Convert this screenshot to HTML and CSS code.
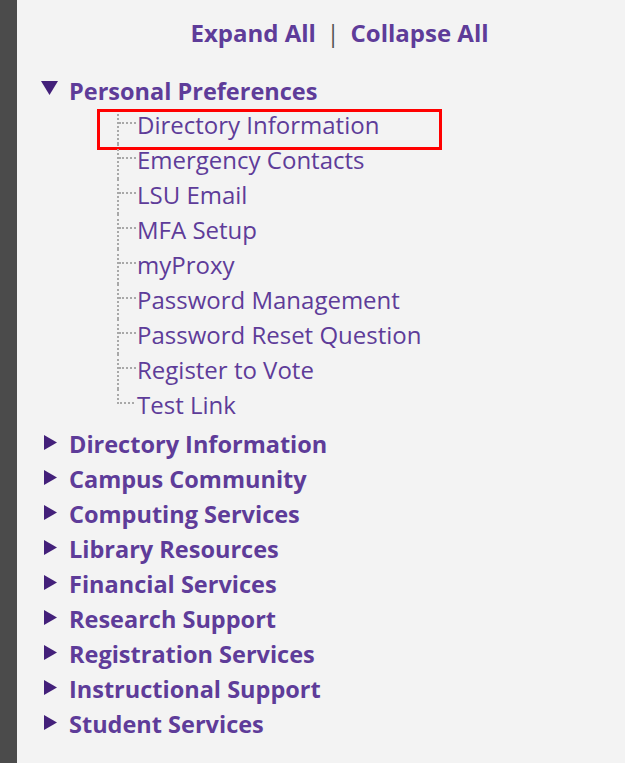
FILE: index.html
```html
<!DOCTYPE html>
<html>
<head>
<meta charset="utf-8">
<link rel="stylesheet" href="styles.css">
</head>
<body>
<div class="page">
  <div class="strip"></div>
  <div class="content">
    <div class="toplinks">
      <a class="toplink">Expand All</a>
      <span class="sep">|</span>
      <a class="toplink">Collapse All</a>
    </div>
    <ul class="tree">
      <li class="node open">
        <div class="row">
          <svg class="tri down" width="17" height="14" viewBox="0 0 17 14"><polygon points="0,0 17,0 8.5,14" /></svg>
          <span class="label">Personal Preferences</span>
        </div>
        <ul class="children">
          <li class="child highlighted"><span class="hl"></span><a>Directory Information</a></li>
          <li class="child"><a>Emergency Contacts</a></li>
          <li class="child"><a>LSU Email</a></li>
          <li class="child"><a>MFA Setup</a></li>
          <li class="child"><a>myProxy</a></li>
          <li class="child"><a>Password Management</a></li>
          <li class="child"><a>Password Reset Question</a></li>
          <li class="child"><a>Register to Vote</a></li>
          <li class="child last"><a>Test Link</a></li>
        </ul>
      </li>
      <li class="node"><div class="row"><svg class="tri right" width="13" height="15" viewBox="0 0 13 15"><polygon points="0,0 13,7.5 0,15" /></svg><span class="label">Directory Information</span></div></li>
      <li class="node"><div class="row"><svg class="tri right" width="13" height="15" viewBox="0 0 13 15"><polygon points="0,0 13,7.5 0,15" /></svg><span class="label">Campus Community</span></div></li>
      <li class="node"><div class="row"><svg class="tri right" width="13" height="15" viewBox="0 0 13 15"><polygon points="0,0 13,7.5 0,15" /></svg><span class="label">Computing Services</span></div></li>
      <li class="node"><div class="row"><svg class="tri right" width="13" height="15" viewBox="0 0 13 15"><polygon points="0,0 13,7.5 0,15" /></svg><span class="label">Library Resources</span></div></li>
      <li class="node"><div class="row"><svg class="tri right" width="13" height="15" viewBox="0 0 13 15"><polygon points="0,0 13,7.5 0,15" /></svg><span class="label">Financial Services</span></div></li>
      <li class="node"><div class="row"><svg class="tri right" width="13" height="15" viewBox="0 0 13 15"><polygon points="0,0 13,7.5 0,15" /></svg><span class="label">Research Support</span></div></li>
      <li class="node"><div class="row"><svg class="tri right" width="13" height="15" viewBox="0 0 13 15"><polygon points="0,0 13,7.5 0,15" /></svg><span class="label">Registration Services</span></div></li>
      <li class="node"><div class="row"><svg class="tri right" width="13" height="15" viewBox="0 0 13 15"><polygon points="0,0 13,7.5 0,15" /></svg><span class="label">Instructional Support</span></div></li>
      <li class="node"><div class="row"><svg class="tri right" width="13" height="15" viewBox="0 0 13 15"><polygon points="0,0 13,7.5 0,15" /></svg><span class="label">Student Services</span></div></li>
    </ul>
  </div>
</div>
</body>
</html>
```

FILE: styles.css
```css
html, body {
  margin: 0;
  padding: 0;
  background: #f3f3f3;
  font-family: "Open Sans", "Noto Sans", sans-serif;
}

.page {
  display: flex;
  min-height: 763px;
}

.strip {
  width: 17px;
  flex: none;
  background: #4b4b4b;
}

.content {
  flex: 1;
  color: #5e3c99;
}

.toplinks {
  display: flex;
  justify-content: center;
  align-items: center;
  gap: 11px;
  padding: 15px 0 0 37px;
  height: 35px;
  font-size: 24px;
  font-weight: 700;
}

.toplink {
  color: #5e3c99;
}

.sep {
  color: #505050;
  font-weight: 400;
  font-size: 23px;
}

.tree {
  list-style: none;
  margin: 24px 0 0 0;
  padding: 0 0 0 24px;
}

.node {
  margin: 0;
}

.node.open {
  margin-bottom: 3px;
}

.row {
  display: flex;
  align-items: flex-start;
  height: 35px;
  line-height: 35px;
  font-size: 23.5px;
  font-weight: 700;
}

.tri {
  flex: none;
  fill: #43207a;
}

.tri.down {
  margin-top: 7px;
  margin-right: 11px;
}

.tri.right {
  margin-top: 8px;
  margin-left: 3px;
  margin-right: 12px;
}

.label {
  white-space: nowrap;
}

.children {
  list-style: none;
  margin: 0 0 0 76px;
  padding: 0;
}

.child {
  position: relative;
  height: 35px;
  line-height: 31px;
  padding-left: 18px;
  font-size: 24px;
  border-left: 2px dotted #a8a8a8;
  box-sizing: border-box;
  white-space: nowrap;
}

.child::before {
  content: "";
  position: absolute;
  left: 0;
  top: 13px;
  width: 17px;
  border-top: 2px dotted #a8a8a8;
}

.child.last {
  border-left: none;
}

.child.last::after {
  content: "";
  position: absolute;
  left: 0;
  top: 0;
  height: 15px;
  border-left: 2px dotted #a8a8a8;
}

.child.last a {
  margin-left: 2px;
}

.child a {
  color: #5e3c99;
}

.hl {
  position: absolute;
  left: -22px;
  top: 0;
  width: 345px;
  height: 41px;
  border: 3px solid #ff0000;
  box-sizing: border-box;
}
```
